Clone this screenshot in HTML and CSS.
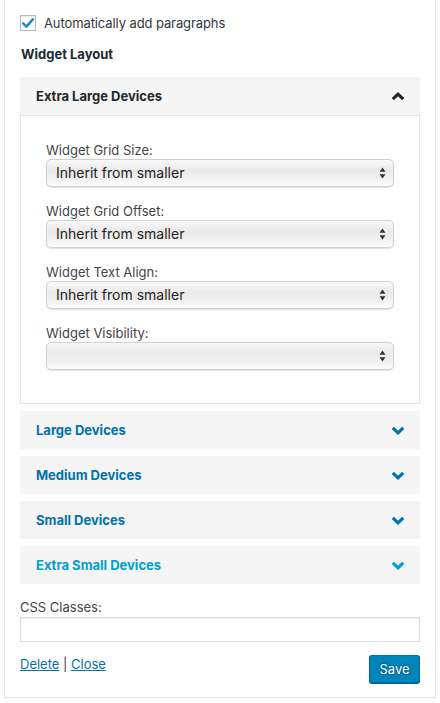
FILE: index.html
```html
<!DOCTYPE html>
<html>
<head>
<meta charset="utf-8">
<link rel="stylesheet" href="styles.css">
</head>
<body>
<div class="widget">
  <div class="check-row">
    <span class="checkbox">
      <svg width="14" height="14" viewBox="0 0 14 14"><path d="M2.2 7.4 L5.4 10.6 L11.8 3.4" fill="none" stroke="#1e8cbe" stroke-width="2.6" stroke-linecap="round" stroke-linejoin="round"/></svg>
    </span>
    <span class="check-label">Automatically add paragraphs</span>
  </div>
  <div class="section-title">Widget Layout</div>

  <div class="accordion">
    <div class="acc-item open">
      <div class="acc-head">
        <span class="acc-title">Extra Large Devices</span>
        <svg class="chev" width="14" height="9" viewBox="0 0 14 9"><polyline points="1.8,7.2 7,2.2 12.2,7.2" fill="none" stroke="#23282d" stroke-width="3.2"/></svg>
      </div>
      <div class="acc-body">
        <div class="field">
          <div class="field-label">Widget Grid Size:</div>
          <div class="select"><span class="select-text">Inherit from smaller</span>
            <svg class="updown" width="7" height="12" viewBox="0 0 7 12"><path d="M3.5 0.5 L6.5 4.8 L0.5 4.8 Z M3.5 11.5 L6.5 7.2 L0.5 7.2 Z" fill="#333"/></svg>
          </div>
        </div>
        <div class="field">
          <div class="field-label">Widget Grid Offset:</div>
          <div class="select"><span class="select-text">Inherit from smaller</span>
            <svg class="updown" width="7" height="12" viewBox="0 0 7 12"><path d="M3.5 0.5 L6.5 4.8 L0.5 4.8 Z M3.5 11.5 L6.5 7.2 L0.5 7.2 Z" fill="#333"/></svg>
          </div>
        </div>
        <div class="field">
          <div class="field-label">Widget Text Align:</div>
          <div class="select"><span class="select-text">Inherit from smaller</span>
            <svg class="updown" width="7" height="12" viewBox="0 0 7 12"><path d="M3.5 0.5 L6.5 4.8 L0.5 4.8 Z M3.5 11.5 L6.5 7.2 L0.5 7.2 Z" fill="#333"/></svg>
          </div>
        </div>
        <div class="field">
          <div class="field-label">Widget Visibility:</div>
          <div class="select"><span class="select-text"></span>
            <svg class="updown" width="7" height="12" viewBox="0 0 7 12"><path d="M3.5 0.5 L6.5 4.8 L0.5 4.8 Z M3.5 11.5 L6.5 7.2 L0.5 7.2 Z" fill="#333"/></svg>
          </div>
        </div>
      </div>
    </div>

    <div class="acc-item">
      <div class="acc-head">
        <span class="acc-title link">Large Devices</span>
        <svg class="chev" width="14" height="9" viewBox="0 0 14 9"><polyline points="1.8,1.8 7,6.8 12.2,1.8" fill="none" stroke="#0073aa" stroke-width="3.2"/></svg>
      </div>
    </div>
    <div class="acc-item">
      <div class="acc-head">
        <span class="acc-title link">Medium Devices</span>
        <svg class="chev" width="14" height="9" viewBox="0 0 14 9"><polyline points="1.8,1.8 7,6.8 12.2,1.8" fill="none" stroke="#0073aa" stroke-width="3.2"/></svg>
      </div>
    </div>
    <div class="acc-item">
      <div class="acc-head">
        <span class="acc-title link">Small Devices</span>
        <svg class="chev" width="14" height="9" viewBox="0 0 14 9"><polyline points="1.8,1.8 7,6.8 12.2,1.8" fill="none" stroke="#0073aa" stroke-width="3.2"/></svg>
      </div>
    </div>
    <div class="acc-item">
      <div class="acc-head">
        <span class="acc-title link hover">Extra Small Devices</span>
        <svg class="chev" width="14" height="9" viewBox="0 0 14 9"><polyline points="1.8,1.8 7,6.8 12.2,1.8" fill="none" stroke="#00a0d2" stroke-width="3.2"/></svg>
      </div>
    </div>
  </div>

  <div class="css-label">CSS Classes:</div>
  <div class="text-input"></div>

  <div class="actions">
    <div class="links"><a href="#">Delete</a> | <a href="#">Close</a></div>
    <button class="save">Save</button>
  </div>
</div>
</body>
</html>
```
FILE: styles.css
```css
html, body {
  margin: 0;
  padding: 0;
  background: #fff;
}
body {
  font-family: Inter, "Liberation Sans", Arial, sans-serif;
  font-size: 13px;
  color: #444;
  line-height: 18px;
}
.widget {
  margin: 0 4px;
  border: 1px solid #e5e5e5;
  border-top: none;
  padding: 13px 15px 14px;
  background: #fff;
}
.check-row {
  display: flex;
  align-items: center;
  height: 20px;
}
.checkbox {
  width: 14px;
  height: 14px;
  border: 1px solid #b4b9be;
  background: #fff;
  box-shadow: inset 0 1px 2px rgba(0,0,0,0.1);
  display: flex;
  align-items: center;
  justify-content: center;
  margin-right: 8px;
}
.check-label {
  color: #32373c;
  letter-spacing: -0.1px;
}
.section-title {
  margin-top: 12px;
  font-weight: 700;
  color: #23282d;
  padding-left: 1px;
}
.accordion {
  margin-top: 14px;
}
.acc-item + .acc-item {
  margin-top: 7px;
}
.acc-head {
  height: 38px;
  background: #f5f5f5;
  display: flex;
  align-items: center;
  justify-content: space-between;
  padding: 0 15px 0 16px;
}
.acc-title {
  font-weight: 700;
  color: #23282d;
}
.acc-title.link {
  color: #0073aa;
}
.acc-title.hover {
  color: #00a0d2;
}
.acc-body {
  border: 1px solid #e5e5e5;
  padding: 25px 25px 18px;
}
.field {
  margin-bottom: 15px;
}
.field-label {
  color: #444;
  height: 18px;
}
.select {
  position: relative;
  height: 26px;
  border: 1px solid #d0d0d0;
  border-radius: 5px;
  background: linear-gradient(to bottom, #f9f9f9 0%, #e9e9e9 40%, #f0f0f0 70%, #fdfdfd 100%);
  box-shadow: 0 1px 1px rgba(0,0,0,0.12);
  display: flex;
  align-items: center;
  padding-left: 9px;
}
.select-text {
  font-size: 14px;
  color: #222;
}
.updown {
  position: absolute;
  right: 7px;
  top: 7px;
}
.css-label {
  margin-top: 14px;
  height: 18px;
}
.text-input {
  margin-top: 1px;
  height: 23px;
  border: 1px solid #ddd;
  box-shadow: inset 0 1px 2px rgba(0,0,0,0.07);
  background: #fff;
}
.actions {
  display: flex;
  justify-content: space-between;
  align-items: flex-start;
  margin-top: 13px;
}
.links {
  color: #444;
}
.links a {
  color: #0073aa;
  text-decoration: underline;
}
.save {
  height: 28px;
  width: 51px;
  padding: 0;
  font-family: inherit;
  font-size: 13px;
  color: #fff;
  background: #0085ba;
  border: 1px solid #0073aa;
  border-color: #0073aa #006799 #006799;
  border-radius: 3px;
  box-shadow: 0 1px 0 #006799;
  text-shadow: 0 -1px 1px #006799, 1px 0 1px #006799, 0 1px 1px #006799, -1px 0 1px #006799;
}
```
